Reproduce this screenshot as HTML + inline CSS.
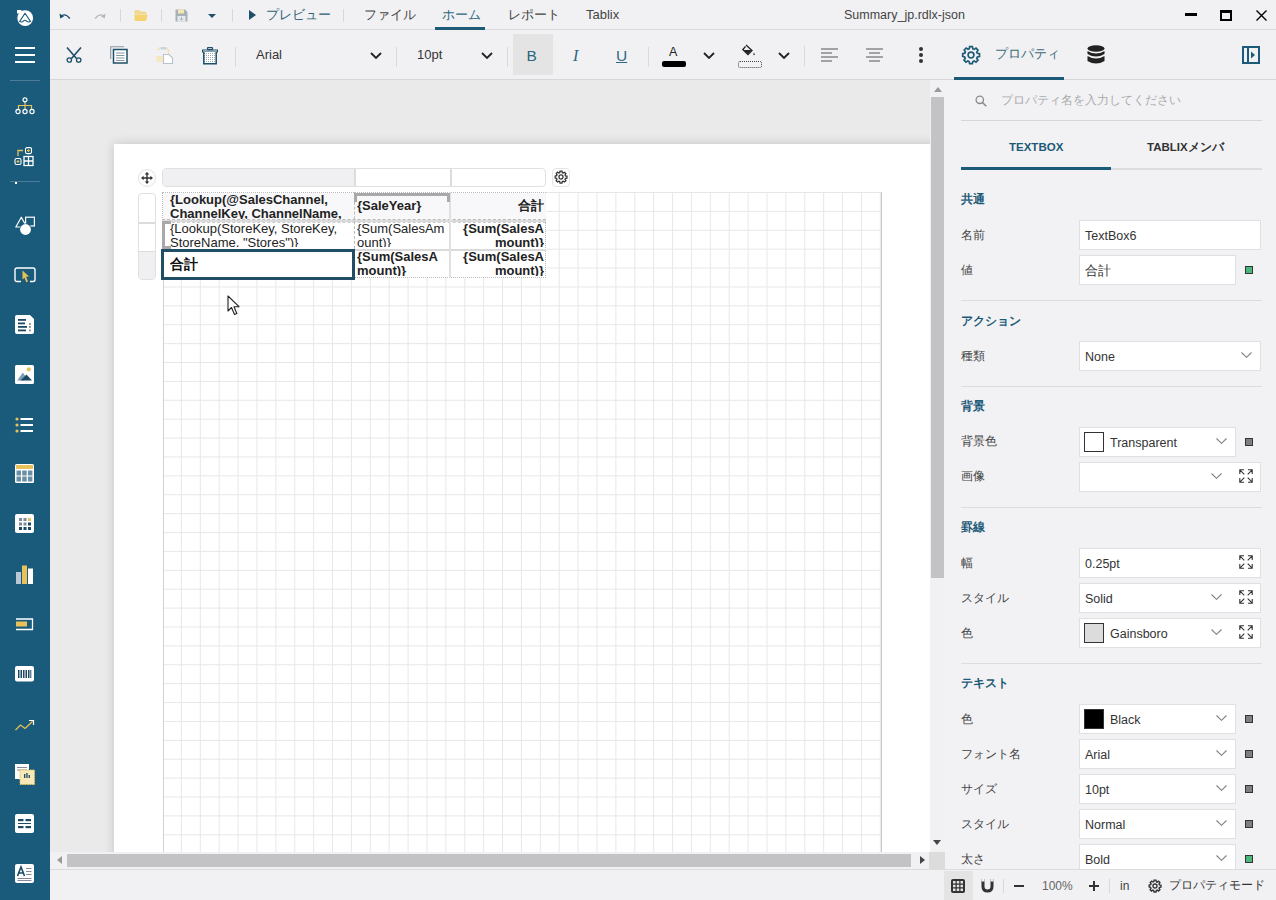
<!DOCTYPE html>
<html><head><meta charset="utf-8">
<style>
*{box-sizing:border-box;margin:0;padding:0}
html,body{width:1276px;height:900px;overflow:hidden;background:#f1f1f3;font-family:"Liberation Sans",sans-serif;color:#333;position:relative}
.abs{position:absolute}
.t{position:absolute;white-space:nowrap;line-height:16px}
#side{position:absolute;left:0;top:0;width:50px;height:900px;background:#1a5a7a}
#top{position:absolute;left:50px;top:0;width:1226px;height:30px;background:#f1f1f3;border-bottom:1px solid #dcdcde}
#tb{position:absolute;left:50px;top:30px;width:1226px;height:50px;background:#f1f1f3;border-bottom:1px solid #d6d6d8}
#canvas{position:absolute;left:50px;top:80px;width:895px;height:789px;background:#eaeaeb;overflow:hidden}
#page{position:absolute;left:64px;top:64px;width:900px;height:900px;background:#fff;box-shadow:0 0 10px rgba(0,0,0,.16)}
#grid{position:absolute;left:112.5px;top:112px;width:719px;height:700px;
 background-image:linear-gradient(to right,#e7e7eb 1px,transparent 1px),linear-gradient(to bottom,#e7e7eb 1px,transparent 1px);
 background-size:18.9px 18.9px;background-origin:border-box;background-position:-1px 0;border-left:1px solid #d2d2d2;border-right:1px solid #c8c8c8}
#right{position:absolute;left:945px;top:80px;width:331px;height:789px;background:#f2f2f4;overflow:hidden}
#status{position:absolute;left:50px;top:869px;width:1226px;height:31px;background:#f1f1f3;border-top:1px solid #dcdcde}
.cell{font-size:13px;line-height:13.6px;color:#222;overflow:hidden;white-space:normal}
.b{font-weight:bold}
.hdr{font-size:12px;font-weight:bold;color:#1d5a78}
.lbl{font-size:12px;color:#444}
.box{height:30px;border:1px solid #e0e0e2;background:#fff}
.val{font-size:12.5px;color:#333}
</style></head><body>
<div id="side">
 <!-- logo -->
 <svg class="abs" style="left:15px;top:8px" width="20" height="20" viewBox="0 0 20 20">
  <circle cx="10.2" cy="10.1" r="7.9" fill="#fff"/>
  <rect x="2" y="2" width="4.5" height="3.5" fill="#fff"/>
  <path d="M10 5.2 L15.6 13.6 Q13 14.6 11.3 12.8 Q10 11.8 8.7 12.8 Q7 14.6 4.6 13.6 Z" fill="none" stroke="#1a5a7a" stroke-width="1.1" stroke-linejoin="round"/>
 </svg>
 <!-- hamburger -->
 <div class="abs" style="left:15px;top:47px;width:20px;height:2px;background:#fff"></div>
 <div class="abs" style="left:15px;top:54px;width:20px;height:2px;background:#fff"></div>
 <div class="abs" style="left:15px;top:61px;width:20px;height:2px;background:#fff"></div>
 <div class="abs" style="left:10px;top:80px;width:30px;height:1px;background:#4d7d96"></div>
 <!-- tree -->
 <svg class="abs" style="left:15px;top:97px" width="20" height="18" viewBox="0 0 20 18">
  <path d="M10 4.5V8.5 M3.5 12V8.5H16.5V12 M10 8.5V12" stroke="#e8c15a" stroke-width="1.2" fill="none"/>
  <circle cx="10" cy="2.8" r="2" fill="none" stroke="#fff" stroke-width="1.2"/>
  <circle cx="3" cy="14.5" r="2.1" fill="none" stroke="#fff" stroke-width="1.2"/>
  <circle cx="10" cy="14.5" r="2.1" fill="none" stroke="#fff" stroke-width="1.2"/>
  <circle cx="17" cy="14.5" r="2.1" fill="none" stroke="#fff" stroke-width="1.2"/>
 </svg>
 <!-- grid-plus -->
 <svg class="abs" style="left:14px;top:147px" width="22" height="20" viewBox="0 0 22 20">
  <path d="M4 9V3.5H9" stroke="#e8c15a" stroke-width="1.3" fill="none"/>
  <rect x="11.5" y="0.6" width="6" height="6" rx="1.5" fill="none" stroke="#fff" stroke-width="1.1"/>
  <path d="M14.5 2.2V5 M13.1 3.6H15.9" stroke="#e8c15a" stroke-width="1.1"/>
  <rect x="1" y="11.5" width="6" height="6" rx="1.5" fill="none" stroke="#fff" stroke-width="1.1"/>
  <path d="M4 13.1V15.9 M2.6 14.5H5.4" stroke="#e8c15a" stroke-width="1.1"/>
  <rect x="10" y="9.5" width="9" height="9" fill="none" stroke="#fff" stroke-width="1.3"/>
  <path d="M14.5 9.5V18.5 M10 14H19" stroke="#fff" stroke-width="1.3"/>
 </svg>
 <div class="abs" style="left:10px;top:181px;width:30px;height:1px;background:#4d7d96"></div>
 <div class="abs" style="left:15px;top:182px;width:2px;height:2px;background:#fff"></div>
 <!-- shapes -->
 <svg class="abs" style="left:15px;top:216px" width="21" height="20" viewBox="0 0 21 20">
  <path d="M0.8 11 L6.3 1.2 L11.8 11 Z" fill="none" stroke="#fff" stroke-width="1.2" stroke-linejoin="round"/>
  <rect x="10.6" y="1.2" width="8.8" height="8.8" fill="none" stroke="#fff" stroke-width="1.2"/>
  <circle cx="10.5" cy="13.5" r="6" fill="#1a5a7a"/>
  <circle cx="10.5" cy="13.5" r="5.4" fill="#fff"/>
 </svg>
 <!-- select -->
 <svg class="abs" style="left:14px;top:267px" width="22" height="16" viewBox="0 0 22 16">
  <path d="M7 14.5H3Q1 14.5 1 12.5V3Q1 1 3 1H19Q21 1 21 3V12.5Q21 14.5 19 14.5H16" fill="none" stroke="#fff" stroke-width="1.4"/>
  <path d="M8.5 3.5 L15 9.5 L12 9.8 L14 14.5 L12.3 15.3 L10.5 10.7 L8.5 12.5 Z" fill="#e8c15a"/>
 </svg>
 <!-- doc -->
 <svg class="abs" style="left:15px;top:315px" width="20" height="19" viewBox="0 0 20 19">
  <path d="M2 0H15L19 4V17Q19 19 17 19H2Q0 19 0 17V2Q0 0 2 0Z" fill="#fff"/>
  <rect x="3" y="4" width="8" height="1.8" fill="#1a4a66"/>
  <rect x="3" y="7.5" width="7" height="1.8" fill="#1a4a66"/>
  <rect x="3" y="11" width="9" height="1.8" fill="#1a4a66"/>
  <rect x="3" y="14.5" width="8" height="1.8" fill="#1a4a66"/>
  <rect x="14" y="8" width="1.8" height="1.8" fill="#888"/>
  <rect x="14" y="11" width="1.8" height="1.8" fill="#888"/>
  <rect x="14" y="14.5" width="1.8" height="1.8" fill="#888"/>
 </svg>
 <!-- image -->
 <svg class="abs" style="left:15px;top:365px" width="20" height="19" viewBox="0 0 20 19">
  <rect x="0" y="0" width="19" height="19" rx="1.5" fill="#fff"/>
  <circle cx="13.8" cy="4.3" r="2.1" fill="#e8c15a"/>
  <path d="M2.2 15.5 L7.8 7.5 L11 12 L8.5 15.5 Z" fill="#7d9db0"/>
  <path d="M5.5 15.5 L11.5 9.5 L17 15.5 Z" fill="#1a4a66"/>
 </svg>
 <!-- list -->
 <svg class="abs" style="left:15px;top:417px" width="19" height="17" viewBox="0 0 19 17">
  <circle cx="2" cy="2" r="1.6" fill="#e8c15a"/><rect x="5.5" y="1" width="12.5" height="2" fill="#fff"/>
  <circle cx="2" cy="8" r="1.6" fill="#e8c15a"/><rect x="5.5" y="7" width="12.5" height="2" fill="#fff"/>
  <circle cx="2" cy="14" r="1.6" fill="#e8c15a"/><rect x="5.5" y="13" width="12.5" height="2" fill="#fff"/>
 </svg>
 <!-- table -->
 <svg class="abs" style="left:15px;top:464px" width="20" height="20" viewBox="0 0 20 20">
  <rect x="0" y="0" width="19" height="19" rx="1.5" fill="#fff"/>
  <rect x="1" y="1" width="17" height="4" fill="#e8c15a"/>
  <rect x="1.5" y="6.5" width="4.5" height="5" fill="#6a8ea3"/><rect x="7.2" y="6.5" width="4.5" height="5" fill="#6a8ea3"/><rect x="12.9" y="6.5" width="4.5" height="5" fill="#6a8ea3"/>
  <rect x="1.5" y="12.5" width="4.5" height="5" fill="#6a8ea3"/><rect x="7.2" y="12.5" width="4.5" height="5" fill="#6a8ea3"/><rect x="12.9" y="12.5" width="4.5" height="5" fill="#6a8ea3"/>
 </svg>
 <!-- matrix -->
 <svg class="abs" style="left:15px;top:514px" width="20" height="20" viewBox="0 0 20 20">
  <rect x="0" y="0" width="19" height="19" rx="2" fill="#fff"/>
  <rect x="4" y="4" width="3" height="3" fill="#7a8e9a"/><rect x="8.5" y="4" width="3" height="3" fill="#7a8e9a"/><rect x="13" y="4" width="3" height="3" fill="#e8c15a"/>
  <rect x="4" y="8.5" width="3" height="3" fill="#7a8e9a"/><rect x="8.5" y="8.5" width="3" height="3" fill="#7a8e9a"/><rect x="13" y="8.5" width="3" height="3" fill="#1a4a66"/>
  <rect x="4" y="13" width="3" height="3" fill="#1a4a66"/><rect x="8.5" y="13" width="3" height="3" fill="#1a4a66"/><rect x="13" y="13" width="3" height="3" fill="#1a4a66"/>
 </svg>
 <!-- chart -->
 <svg class="abs" style="left:16px;top:565px" width="18" height="19" viewBox="0 0 18 19">
  <rect x="0" y="7" width="5" height="12" fill="#b9c8d2"/>
  <rect x="6" y="0.5" width="5" height="18.5" fill="#e8c15a"/>
  <rect x="12" y="3.5" width="5" height="15.5" fill="#fff"/>
 </svg>
 <!-- bullet -->
 <svg class="abs" style="left:16px;top:618px" width="18" height="13" viewBox="0 0 18 13">
  <path d="M0 1H16.5V11.5H0" fill="none" stroke="#fff" stroke-width="1.3"/>
  <rect x="0" y="3.5" width="11" height="5" fill="#e8c15a"/>
 </svg>
 <!-- barcode -->
 <svg class="abs" style="left:15px;top:666px" width="20" height="16" viewBox="0 0 20 16">
  <rect x="0" y="0" width="19" height="15.5" rx="2" fill="#fff"/>
  <rect x="3" y="4" width="1.5" height="8" fill="#1a4a66"/><rect x="5.5" y="4" width="1.5" height="8" fill="#1a4a66"/>
  <rect x="8" y="4" width="1.5" height="8" fill="#1a4a66"/><rect x="10.5" y="4" width="1.5" height="8" fill="#1a4a66"/>
  <rect x="13" y="4" width="1.5" height="8" fill="#1a4a66"/><rect x="15.3" y="4" width="1" height="8" fill="#1a4a66"/>
 </svg>
 <!-- sparkline -->
 <svg class="abs" style="left:15px;top:719px" width="20" height="13" viewBox="0 0 20 13">
  <path d="M0.5 11 L5.5 6 L10 9.5 L17.5 2.5" fill="none" stroke="#e8c15a" stroke-width="1.3"/>
  <path d="M14 1.5H18.5V6" fill="none" stroke="#fff" stroke-width="1.2"/>
 </svg>
 <!-- subreport -->
 <svg class="abs" style="left:15px;top:764px" width="20" height="21" viewBox="0 0 20 21">
  <rect x="0" y="0" width="14" height="15" fill="#fff"/>
  <rect x="2" y="3" width="10" height="1" fill="#889"/><rect x="2" y="5.5" width="10" height="1" fill="#889"/>
  <rect x="5" y="6" width="14.5" height="14.5" fill="#f7e9b8" stroke="#e8c15a" stroke-width="1" stroke-dasharray="1.5 1"/>
  <rect x="9" y="10" width="1.3" height="4" fill="#1a4a66"/><rect x="11.3" y="9" width="1.3" height="5" fill="#1a4a66"/><rect x="13.6" y="11" width="1.3" height="3" fill="#1a4a66"/>
 </svg>
 <!-- banded -->
 <svg class="abs" style="left:15px;top:814px" width="20" height="20" viewBox="0 0 20 20">
  <rect x="0" y="0" width="19" height="19" rx="2" fill="#fff"/>
  <rect x="3" y="5" width="5.5" height="2.2" fill="#1a4a66"/><rect x="10.5" y="5" width="5.5" height="2.2" fill="#1a4a66"/>
  <rect x="3" y="9" width="13" height="1" fill="#1a4a66"/>
  <rect x="3" y="12" width="5.5" height="2.2" fill="#1a4a66"/><rect x="10.5" y="12" width="5.5" height="2.2" fill="#1a4a66"/>
 </svg>
 <!-- richtext -->
 <svg class="abs" style="left:15px;top:864px" width="20" height="20" viewBox="0 0 20 20">
  <rect x="0" y="0" width="19" height="19" rx="2" fill="#fff"/>
  <path d="M2.5 12 L6 3 L9.5 12 M3.8 9H8.2" fill="none" stroke="#1a4a66" stroke-width="1.6"/>
  <rect x="11" y="4" width="5.5" height="1" fill="#889"/><rect x="11" y="7" width="5.5" height="1" fill="#889"/><rect x="11" y="10" width="5.5" height="1" fill="#889"/>
  <rect x="2.5" y="14" width="14" height="1" fill="#889"/><rect x="2.5" y="16" width="14" height="1" fill="#889"/>
 </svg>
</div>

<div id="top">
 <!-- undo -->
 <svg class="abs" style="left:9px;top:12px" width="12" height="8" viewBox="0 0 12 8">
  <path d="M2.5 4 Q6.5 1 10.8 6.5" fill="none" stroke="#1d4f68" stroke-width="1.3"/>
  <path d="M0.5 1.5 L1.2 6.5 L5 4.5 Z" fill="#1d4f68"/>
 </svg>
 <!-- redo -->
 <svg class="abs" style="left:44px;top:12px" width="12" height="8" viewBox="0 0 12 8">
  <path d="M9.5 4 Q5.5 1 1.2 6.5" fill="none" stroke="#b4b8bb" stroke-width="1.3"/>
  <path d="M11.5 1.5 L10.8 6.5 L7 4.5 Z" fill="#b4b8bb"/>
 </svg>
 <div class="abs" style="left:70px;top:9px;width:1px;height:13px;background:#d8d8da"></div>
 <!-- folder -->
 <svg class="abs" style="left:84px;top:9px" width="14" height="13" viewBox="0 0 14 13">
  <path d="M0.5 2.5Q0.5 1 2 1H5L6.5 2.5H11Q12.5 2.5 12.5 4V5H0.5Z" fill="#f0d890"/>
  <path d="M0.5 5.5H13.5L12.5 11Q12.2 12 11 12H2Q0.8 12 0.5 11Z" fill="#f5d371"/>
 </svg>
 <div class="abs" style="left:111px;top:9px;width:1px;height:13px;background:#d8d8da"></div>
 <!-- save -->
 <svg class="abs" style="left:125px;top:9px" width="13" height="13" viewBox="0 0 13 13">
  <path d="M0.5 0.5H10L12.5 3V12.5H0.5Z" fill="#a7b1b8"/>
  <rect x="3" y="0.5" width="6" height="4" fill="#f3e6b0"/>
  <rect x="2.5" y="7" width="8" height="5.5" fill="#e6eaee"/>
  <path d="M6.5 8V11 M5 9.7L6.5 11.2L8 9.7" stroke="#a7b1b8" stroke-width="1" fill="none"/>
 </svg>
 <!-- caret -->
 <svg class="abs" style="left:158px;top:14px" width="8" height="4" viewBox="0 0 8 4"><path d="M0 0H8L4 4Z" fill="#1d4f68"/></svg>
 <div class="abs" style="left:182px;top:9px;width:1px;height:13px;background:#d8d8da"></div>
 <!-- play -->
 <svg class="abs" style="left:199px;top:10px" width="7" height="10" viewBox="0 0 7 10"><path d="M0 0L7 5L0 10Z" fill="#1d4f68"/></svg>
 <div class="t" style="left:216px;top:7px;font-size:13px;color:#2d5f77">プレビュー</div>
 <div class="abs" style="left:293px;top:9px;width:1px;height:13px;background:#d8d8da"></div>
 <div class="t" style="left:314px;top:7px;font-size:13px;color:#444">ファイル</div>
 <div class="t" style="left:392px;top:7px;font-size:13px;color:#2d6680">ホーム</div>
 <div class="abs" style="left:385px;top:27px;width:50px;height:3px;background:#1d5a78"></div>
 <div class="t" style="left:458px;top:7px;font-size:13px;color:#444">レポート</div>
 <div class="t" style="left:536px;top:7px;font-size:13px;color:#444">Tablix</div>
 <div class="t" style="left:794px;top:7px;font-size:12.5px;color:#444">Summary_jp.rdlx-json</div>
 <div class="abs" style="left:1135px;top:13px;width:12px;height:3px;background:#000"></div>
 <div class="abs" style="left:1170px;top:10px;width:12px;height:11px;border:2px solid #000;border-top-width:3px"></div>
 <svg class="abs" style="left:1206px;top:10px" width="11" height="11" viewBox="0 0 11 11"><path d="M0.5 0.5L10.5 10.5M10.5 0.5L0.5 10.5" stroke="#000" stroke-width="1.4"/></svg>
</div>

<div id="tb">
 <!-- scissors: 66.7-82 x, 48-63 y -->
 <svg class="abs" style="left:16px;top:17px" width="16" height="16" viewBox="0 0 16 16">
  <path d="M1 0.5L10.5 11.5 M15 0.5L5.5 11.5" stroke="#1d4f68" stroke-width="1.6"/>
  <circle cx="3.3" cy="13" r="2.2" fill="#f1f1f3" stroke="#1d4f68" stroke-width="1.3"/>
  <circle cx="12.7" cy="13" r="2.2" fill="#f1f1f3" stroke="#1d4f68" stroke-width="1.3"/>
 </svg>
 <!-- copy: 110.7-128, 46.7-64 -->
 <svg class="abs" style="left:60px;top:16px" width="18" height="18" viewBox="0 0 18 18">
  <path d="M0.7 13V0.7H14" fill="none" stroke="#8a98a0" stroke-width="1.1"/>
  <rect x="3.5" y="3.5" width="13.5" height="13.5" fill="#fff" stroke="#1d4f68" stroke-width="1.5"/>
  <path d="M6 7H14.5M6 9.5H14.5M6 12H14.5M6 14.5H14.5" stroke="#7a8a94" stroke-width="0.9"/>
 </svg>
 <!-- paste disabled: 156-173, 46-64 -->
 <svg class="abs" style="left:106px;top:16px" width="18" height="18" viewBox="0 0 18 18">
  <path d="M0.5 3.5H3V2H11V3.5H12.5V8" fill="none" stroke="#f0e2b0" stroke-width="1.2"/>
  <rect x="4.5" y="1" width="6" height="2.5" rx="1" fill="#c4d6e2"/>
  <rect x="0.5" y="10" width="6" height="6" fill="#f3e8bf"/>
  <path d="M7.5 8.5H13L16.5 12V17.5H7.5Z" fill="#fff" stroke="#b9c2c8" stroke-width="1.1"/>
 </svg>
 <!-- trash: 202-217, 47-64 -->
 <svg class="abs" style="left:152px;top:17px" width="16" height="18" viewBox="0 0 16 18">
  <rect x="5.5" y="0.6" width="5" height="2" rx="0.5" fill="none" stroke="#1d4f68" stroke-width="1.2"/>
  <path d="M0.5 3H15.5V5H0.5Z" fill="none" stroke="#1d4f68" stroke-width="1.2"/>
  <defs><pattern id="dots" width="2" height="2" patternUnits="userSpaceOnUse"><rect width="2" height="2" fill="#fff"/><rect width="1" height="1" fill="#9aa6ae"/></pattern></defs><path d="M1.8 5V16.8H14.2V5" fill="url(#dots)" stroke="#1d4f68" stroke-width="1.5"/>
 </svg>
 <div class="abs" style="left:185px;top:17px;width:1px;height:20px;background:#dadadc"></div>
 <div class="t" style="left:206px;top:17px;font-size:13px;color:#333">Arial</div>
 <svg class="abs" style="left:320px;top:22px" width="12" height="7" viewBox="0 0 12 7"><path d="M1 1L6 6L11 1" fill="none" stroke="#222" stroke-width="1.8"/></svg>
 <div class="abs" style="left:346px;top:17px;width:1px;height:20px;background:#dadadc"></div>
 <div class="t" style="left:367px;top:17px;font-size:13px;color:#333">10pt</div>
 <svg class="abs" style="left:431px;top:22px" width="12" height="7" viewBox="0 0 12 7"><path d="M1 1L6 6L11 1" fill="none" stroke="#222" stroke-width="1.8"/></svg>
 <div class="abs" style="left:457px;top:17px;width:1px;height:20px;background:#dadadc"></div>
 <div class="abs" style="left:463px;top:4px;width:40px;height:41px;background:#e4e4e5"></div>
 <div class="t" style="left:476.5px;top:18px;font-size:15.5px;color:#2d6680">B</div>
 <div class="t" style="left:523px;top:18px;font-size:16px;color:#2d6680;font-family:'Liberation Serif',serif;font-style:italic">I</div>
 <div class="t" style="left:566px;top:18px;font-size:15.5px;color:#2d6680;text-decoration:underline">U</div>
 <div class="abs" style="left:598px;top:17px;width:1px;height:20px;background:#dadadc"></div>
 <!-- text color -->
 <div class="t" style="left:619px;top:14px;font-size:12.5px;color:#222">A</div>
 <div class="abs" style="left:612px;top:30.7px;width:24px;height:6.3px;border-radius:2px;background:#000"></div>
 <svg class="abs" style="left:653px;top:22px" width="12" height="7" viewBox="0 0 12 7"><path d="M1 1L6 6L11 1" fill="none" stroke="#222" stroke-width="1.8"/></svg>
 <!-- fill -->
 <svg class="abs" style="left:692px;top:14px" width="14" height="13" viewBox="0 0 14 13">
  <path d="M4 1L10 6.5L6 10.5L0.8 5.5L3.5 2.5" fill="none" stroke="#222" stroke-width="1.3"/>
  <path d="M1.5 6H9.5L6 10Z" fill="#222"/>
  <path d="M12 8.5Q13.5 10.5 12 11.5Q10.5 10.5 12 8.5Z" fill="#222"/>
 </svg>
 <div class="abs" style="left:688px;top:31px;width:23.5px;height:6.5px;border:1px dotted #444;border-radius:2px"></div>
 <svg class="abs" style="left:728px;top:22px" width="12" height="7" viewBox="0 0 12 7"><path d="M1 1L6 6L11 1" fill="none" stroke="#222" stroke-width="1.8"/></svg>
 <div class="abs" style="left:754px;top:16px;width:1px;height:20px;background:#dadadc"></div>
 <!-- align left -->
 <svg class="abs" style="left:771px;top:18px" width="18" height="14" viewBox="0 0 18 14">
  <path d="M0 1H17M0 5H11M0 9H17M0 13H11" stroke="#555" stroke-width="1.1"/>
 </svg>
 <svg class="abs" style="left:816px;top:18px" width="18" height="14" viewBox="0 0 18 14">
  <path d="M0 1H17M3 5H14M0 9H17M3 13H14" stroke="#555" stroke-width="1.1"/>
 </svg>
 <!-- more -->
 <div class="abs" style="left:869px;top:17px;width:4px;height:4px;border-radius:2px;background:#333"></div>
 <div class="abs" style="left:869px;top:23px;width:4px;height:4px;border-radius:2px;background:#333"></div>
 <div class="abs" style="left:869px;top:29px;width:4px;height:4px;border-radius:2px;background:#333"></div>
 <!-- gear -->
 <svg class="abs" style="left:911px;top:15px" width="20" height="20" viewBox="0 0 24 24">
  <path fill="none" stroke="#1d5a78" stroke-width="2" d="M12 8.5a3.5 3.5 0 1 0 0 7a3.5 3.5 0 1 0 0-7z M10.3 2h3.4l.5 2.6 1.6.7 2.2-1.5 2.4 2.4-1.5 2.2.7 1.6 2.6.5v3.4l-2.6.5-.7 1.6 1.5 2.2-2.4 2.4-2.2-1.5-1.6.7-.5 2.6h-3.4l-.5-2.6-1.6-.7-2.2 1.5-2.4-2.4 1.5-2.2-.7-1.6L2 13.7v-3.4l2.6-.5.7-1.6-1.5-2.2 2.4-2.4 2.2 1.5 1.6-.7z"/>
 </svg>
 <div class="t" style="left:945px;top:16px;font-size:13px;color:#3d6a80">プロパティ</div>
 <div class="abs" style="left:904px;top:47px;width:110px;height:3px;background:#1d5a78"></div>
 <!-- database -->
 <svg class="abs" style="left:1037px;top:15px" width="18" height="20" viewBox="0 0 18 20">
  <ellipse cx="9" cy="3.5" rx="8.5" ry="3.3" fill="#222"/>
  <path d="M0.5 6Q9 11 17.5 6V9Q9 14 0.5 9Z" fill="#222"/>
  <path d="M0.5 11Q9 16 17.5 11V16Q9 21 0.5 16Z" fill="#222"/>
 </svg>
 <!-- panel toggle -->
 <svg class="abs" style="left:1192px;top:16px" width="18" height="18" viewBox="0 0 18 18">
  <rect x="1" y="1" width="16" height="16" fill="none" stroke="#1d5a78" stroke-width="2"/>
  <path d="M6 1V17" stroke="#1d5a78" stroke-width="2"/>
  <path d="M9 5.5L13 9L9 12.5Z" fill="#1d5a78"/>
 </svg>
</div>

<div id="canvas">
 <div id="page"></div>
 <div id="grid"></div>
 <!-- move handle -->
 <div class="abs" style="left:88px;top:88.5px;width:18px;height:18px;border:1px solid #e2e2e2;border-radius:50%;background:#fff"></div>
 <svg class="abs" style="left:91px;top:91.5px" width="12" height="12" viewBox="0 0 12 12">
  <path d="M6 1V11M1 6H11" stroke="#333" stroke-width="1.4"/>
  <path d="M6 0L8.3 2.6H3.7Z M6 12L8.3 9.4H3.7Z M0 6L2.6 3.7V8.3Z M12 6L9.4 3.7V8.3Z" fill="#333"/>
 </svg>
 <!-- column headers -->
 <div class="abs" style="left:112px;top:88px;width:384px;height:19px;border:1px solid #e0e0e0;border-radius:4px;background:#fff;overflow:hidden">
  <div class="abs" style="left:0;top:0;width:191px;height:17px;background:#f0f0f2"></div>
  <div class="abs" style="left:191px;top:0;width:1.5px;height:17px;background:#dcdcdc"></div>
  <div class="abs" style="left:287px;top:0;width:1.5px;height:17px;background:#dcdcdc"></div>
 </div>
 <div class="abs" style="left:502px;top:88px;width:18px;height:19px;border:1px solid #e4e4e4;border-radius:4px;background:#fff"></div>
 <svg class="abs" style="left:504px;top:90px" width="14" height="14" viewBox="0 0 24 24">
  <path fill="none" stroke="#333" stroke-width="2.2" d="M12 8.5a3.5 3.5 0 1 0 0 7a3.5 3.5 0 1 0 0-7z M10.3 2h3.4l.5 2.6 1.6.7 2.2-1.5 2.4 2.4-1.5 2.2.7 1.6 2.6.5v3.4l-2.6.5-.7 1.6 1.5 2.2-2.4 2.4-2.2-1.5-1.6.7-.5 2.6h-3.4l-.5-2.6-1.6-.7-2.2 1.5-2.4-2.4 1.5-2.2-.7-1.6L2 13.7v-3.4l2.6-.5.7-1.6-1.5-2.2 2.4-2.4 2.2 1.5 1.6-.7z"/>
 </svg>
 <!-- row handles -->
 <div class="abs" style="left:88px;top:113px;width:18px;height:87px;border:1px solid #e0e0e0;border-radius:4px;background:#fff;overflow:hidden">
  <div class="abs" style="left:0;top:28px;width:16px;height:1.5px;background:#dcdcdc"></div>
  <div class="abs" style="left:0;top:56.5px;width:16px;height:1.5px;background:#dcdcdc"></div>
  <div class="abs" style="left:0;top:58px;width:16px;height:28px;background:#f0f0f2"></div>
 </div>
 <!-- table -->
 <div class="abs" style="left:112px;top:112px;width:384px;height:86px;border:1px dotted #bbb;background:#fff"></div>
 <div class="abs" style="left:112.5px;top:112.5px;width:383px;height:27px;background:#f8f8fa"></div>
 <div class="abs" style="left:112px;top:139px;width:384px;height:0;border-top:1px dashed #bbb"></div>
 <div class="abs" style="left:112px;top:140px;width:384px;height:2px;background:#dadada"></div>
 <div class="abs" style="left:112px;top:142px;width:384px;height:0;border-top:1px dashed #ccc"></div>
 <div class="abs" style="left:112px;top:169px;width:384px;height:1.5px;background:#dadada"></div>
 <div class="abs" style="left:303.5px;top:112px;width:0;height:86px;border-left:1px dashed #bbb"></div>
 <div class="abs" style="left:398.5px;top:112px;width:2px;height:86px;background:#e0e0e0"></div>
 <!-- bracket over SaleYear -->
 <div class="abs" style="left:304px;top:112.5px;width:96px;height:9.5px;border:3px solid #a9a9a9;border-bottom:none"></div>
 <!-- bracket row 2 -->
 <div class="abs" style="left:112px;top:141px;width:9px;height:28px;border:3px solid #a9a9a9;border-right:none"></div>
 <!-- texts -->
 <div class="abs cell b" style="left:120px;top:113px;width:183px;height:25.5px">{Lookup(@SalesChannel, ChannelKey, ChannelName, "Channels")}</div>
 <div class="abs cell b" style="left:307px;top:119px;width:92px;height:16px">{SaleYear}</div>
 <div class="abs cell b" style="left:402px;top:119px;width:92px;height:16px;text-align:right">合計</div>
 <div class="abs cell" style="left:120px;top:142px;width:183px;height:24.5px">{Lookup(StoreKey, StoreKey, StoreName, "Stores")}</div>
 <div class="abs cell" style="left:307px;top:142px;width:92px;height:24.5px;word-break:break-all">{Sum(SalesAmount)}</div>
 <div class="abs cell b" style="left:402px;top:142px;width:92px;height:24.5px;text-align:right;word-break:break-all">{Sum(SalesAmount)}</div>
 <div class="abs cell b" style="left:307px;top:170px;width:92px;height:25.5px;word-break:break-all">{Sum(SalesAmount)}</div>
 <div class="abs cell b" style="left:402px;top:170px;width:92px;height:25.5px;text-align:right;word-break:break-all">{Sum(SalesAmount)}</div>
 <!-- selected cell -->
 <div class="abs" style="left:111px;top:169px;width:194px;height:31px;border:3px solid #1f4e66;background:#fff"></div>
 <div class="abs cell b" style="left:120px;top:176px;width:100px;height:17px;font-size:13.5px;line-height:17px;color:#111">合計</div>
 <!-- cursor -->
 <svg class="abs" style="left:177px;top:215px" width="13" height="21" viewBox="0 0 13 21">
  <path d="M1 1V16L4.5 12.5L7.5 19.5L9.8 18.5L7 11.7H12Z" fill="#fff" stroke="#222" stroke-width="1.1" stroke-linejoin="round"/>
 </svg>
 <!-- v scrollbar -->
 <div class="abs" style="left:880px;top:0;width:15px;height:772px;background:#f1f1f3"></div>
 <svg class="abs" style="left:884px;top:7px" width="8" height="5" viewBox="0 0 8 5"><path d="M0 5L4 0L8 5Z" fill="#999"/></svg>
 <div class="abs" style="left:881px;top:17px;width:13px;height:481px;background:#c3c3c5"></div>
 <svg class="abs" style="left:883px;top:760px" width="8" height="5" viewBox="0 0 8 5"><path d="M0 0L4 5L8 0Z" fill="#444"/></svg>
 <!-- h scrollbar -->
 <div class="abs" style="left:0;top:772px;width:880px;height:17px;background:#f1f1f3"></div>
 <svg class="abs" style="left:7px;top:776px" width="5" height="8" viewBox="0 0 5 8"><path d="M5 0L0 4L5 8Z" fill="#999"/></svg>
 <div class="abs" style="left:16.5px;top:774px;width:844.5px;height:13px;background:#c3c3c5"></div>
 <svg class="abs" style="left:869.5px;top:776px" width="5" height="8" viewBox="0 0 5 8"><path d="M0 0L5 4L0 8Z" fill="#444"/></svg>
 <div class="abs" style="left:879px;top:772px;width:16px;height:17px;background:#dcdcdc"></div>
</div>

<div id="right">
<svg class="abs" style="left:30px;top:15px" width="12" height="12" viewBox="0 0 12 12"><circle cx="4.8" cy="4.8" r="3.7" fill="none" stroke="#8a8a8a" stroke-width="1.3"/><path d="M7.5 7.5L11.3 11.3" stroke="#8a8a8a" stroke-width="1.6"/></svg>
<div class="t" style="left:56px;top:12px;font-size:11.7px;color:#aaa">プロパティ名を入力してください</div>
<div class="abs" style="left:16px;top:40px;width:301px;height:1px;background:#d6d6d8"></div>
<div class="t" style="left:64px;top:59px;font-size:11.5px;font-weight:bold;color:#1d5a78">TEXTBOX</div>
<div class="t" style="left:202px;top:59px;font-size:11.5px;font-weight:bold;color:#333">TABLIXメンバ</div>
<div class="abs" style="left:16px;top:87px;width:150px;height:3px;background:#1d5a78"></div>
<div class="abs" style="left:166px;top:88px;width:151px;height:2px;background:#dcdcde"></div>
<div class="t hdr" style="left:16px;top:111px">共通</div>
<div class="t lbl" style="left:16px;top:147px">名前</div>
<div class="abs box" style="left:134px;top:140px;width:182px"></div>
<div class="t val" style="left:140px;top:148px">TextBox6</div>
<div class="t lbl" style="left:16px;top:182px">値</div>
<div class="abs box" style="left:134px;top:175px;width:157px"></div>
<div class="t val" style="left:140px;top:183px">合計</div>
<div class="abs" style="left:300px;top:186px;width:8px;height:8px;border:1.3px solid #333;background:#4cb77a"></div>
<div class="abs" style="left:16px;top:220px;width:301px;height:1px;background:#dcdcde"></div>
<div class="t hdr" style="left:16px;top:233px">アクション</div>
<div class="t lbl" style="left:16px;top:268px">種類</div>
<div class="abs box" style="left:134px;top:261px;width:182px"></div>
<div class="t val" style="left:140px;top:269px">None</div>
<svg class="abs" style="left:296px;top:272px" width="11" height="6" viewBox="0 0 11 6"><path d="M0.5 0.5L5.5 5.3L10.5 0.5" fill="none" stroke="#808080" stroke-width="1.1"/></svg>
<div class="abs" style="left:16px;top:306px;width:301px;height:1px;background:#dcdcde"></div>
<div class="t hdr" style="left:16px;top:318px">背景</div>
<div class="t lbl" style="left:16px;top:353px">背景色</div>
<div class="abs box" style="left:134px;top:347px;width:157px"></div>
<div class="abs" style="left:139px;top:352px;width:20px;height:20px;border:1px solid #333;background:#fff"></div>
<div class="t val" style="left:165px;top:355px">Transparent</div>
<svg class="abs" style="left:271px;top:358px" width="11" height="6" viewBox="0 0 11 6"><path d="M0.5 0.5L5.5 5.3L10.5 0.5" fill="none" stroke="#808080" stroke-width="1.1"/></svg>
<div class="abs" style="left:300px;top:358px;width:8px;height:8px;border:1.3px solid #333;background:#7f7f7f"></div>
<div class="t lbl" style="left:16px;top:388px">画像</div>
<div class="abs box" style="left:134px;top:382px;width:182px"></div>
<svg class="abs" style="left:266px;top:393px" width="11" height="6" viewBox="0 0 11 6"><path d="M0.5 0.5L5.5 5.3L10.5 0.5" fill="none" stroke="#808080" stroke-width="1.1"/></svg>
<svg class="abs" style="left:294px;top:389px" width="14" height="14" viewBox="0 0 14 14"><path d="M0.8 5V0.8H5 M0.8 0.8L5.3 5.3 M9 0.8H13.2V5 M13.2 0.8L8.7 5.3 M0.8 9V13.2H5 M0.8 13.2L5.3 8.7 M9 13.2H13.2V9 M13.2 13.2L8.7 8.7" fill="none" stroke="#333" stroke-width="1.1"/></svg>
<div class="abs" style="left:16px;top:427px;width:301px;height:1px;background:#dcdcde"></div>
<div class="t hdr" style="left:16px;top:439px">罫線</div>
<div class="t lbl" style="left:16px;top:475px">幅</div>
<div class="abs box" style="left:134px;top:468px;width:182px"></div>
<div class="t val" style="left:140px;top:476px">0.25pt</div>
<svg class="abs" style="left:294px;top:475px" width="14" height="14" viewBox="0 0 14 14"><path d="M0.8 5V0.8H5 M0.8 0.8L5.3 5.3 M9 0.8H13.2V5 M13.2 0.8L8.7 5.3 M0.8 9V13.2H5 M0.8 13.2L5.3 8.7 M9 13.2H13.2V9 M13.2 13.2L8.7 8.7" fill="none" stroke="#333" stroke-width="1.1"/></svg>
<div class="t lbl" style="left:16px;top:510px">スタイル</div>
<div class="abs box" style="left:134px;top:503px;width:182px"></div>
<div class="t val" style="left:140px;top:511px">Solid</div>
<svg class="abs" style="left:266px;top:514px" width="11" height="6" viewBox="0 0 11 6"><path d="M0.5 0.5L5.5 5.3L10.5 0.5" fill="none" stroke="#808080" stroke-width="1.1"/></svg>
<svg class="abs" style="left:294px;top:510px" width="14" height="14" viewBox="0 0 14 14"><path d="M0.8 5V0.8H5 M0.8 0.8L5.3 5.3 M9 0.8H13.2V5 M13.2 0.8L8.7 5.3 M0.8 9V13.2H5 M0.8 13.2L5.3 8.7 M9 13.2H13.2V9 M13.2 13.2L8.7 8.7" fill="none" stroke="#333" stroke-width="1.1"/></svg>
<div class="t lbl" style="left:16px;top:545px">色</div>
<div class="abs box" style="left:134px;top:538px;width:182px"></div>
<div class="abs" style="left:139px;top:543px;width:20px;height:20px;border:1px solid #333;background:#dcdcdc"></div>
<div class="t val" style="left:165px;top:546px">Gainsboro</div>
<svg class="abs" style="left:266px;top:549px" width="11" height="6" viewBox="0 0 11 6"><path d="M0.5 0.5L5.5 5.3L10.5 0.5" fill="none" stroke="#808080" stroke-width="1.1"/></svg>
<svg class="abs" style="left:294px;top:545px" width="14" height="14" viewBox="0 0 14 14"><path d="M0.8 5V0.8H5 M0.8 0.8L5.3 5.3 M9 0.8H13.2V5 M13.2 0.8L8.7 5.3 M0.8 9V13.2H5 M0.8 13.2L5.3 8.7 M9 13.2H13.2V9 M13.2 13.2L8.7 8.7" fill="none" stroke="#333" stroke-width="1.1"/></svg>
<div class="abs" style="left:16px;top:583px;width:301px;height:1px;background:#dcdcde"></div>
<div class="t hdr" style="left:16px;top:595px">テキスト</div>
<div class="t lbl" style="left:16px;top:631px">色</div>
<div class="abs box" style="left:134px;top:624px;width:157px"></div>
<div class="abs" style="left:139px;top:629px;width:20px;height:20px;border:1px solid #333;background:#000"></div>
<div class="t val" style="left:165px;top:632px">Black</div>
<svg class="abs" style="left:271px;top:635px" width="11" height="6" viewBox="0 0 11 6"><path d="M0.5 0.5L5.5 5.3L10.5 0.5" fill="none" stroke="#808080" stroke-width="1.1"/></svg>
<div class="abs" style="left:300px;top:635px;width:8px;height:8px;border:1.3px solid #333;background:#7f7f7f"></div>
<div class="t lbl" style="left:16px;top:666px">フォント名</div>
<div class="abs box" style="left:134px;top:659px;width:157px"></div>
<div class="t val" style="left:140px;top:667px">Arial</div>
<svg class="abs" style="left:271px;top:670px" width="11" height="6" viewBox="0 0 11 6"><path d="M0.5 0.5L5.5 5.3L10.5 0.5" fill="none" stroke="#808080" stroke-width="1.1"/></svg>
<div class="abs" style="left:300px;top:670px;width:8px;height:8px;border:1.3px solid #333;background:#7f7f7f"></div>
<div class="t lbl" style="left:16px;top:701px">サイズ</div>
<div class="abs box" style="left:134px;top:694px;width:157px"></div>
<div class="t val" style="left:140px;top:702px">10pt</div>
<svg class="abs" style="left:271px;top:705px" width="11" height="6" viewBox="0 0 11 6"><path d="M0.5 0.5L5.5 5.3L10.5 0.5" fill="none" stroke="#808080" stroke-width="1.1"/></svg>
<div class="abs" style="left:300px;top:705px;width:8px;height:8px;border:1.3px solid #333;background:#7f7f7f"></div>
<div class="t lbl" style="left:16px;top:736px">スタイル</div>
<div class="abs box" style="left:134px;top:729px;width:157px"></div>
<div class="t val" style="left:140px;top:737px">Normal</div>
<svg class="abs" style="left:271px;top:740px" width="11" height="6" viewBox="0 0 11 6"><path d="M0.5 0.5L5.5 5.3L10.5 0.5" fill="none" stroke="#808080" stroke-width="1.1"/></svg>
<div class="abs" style="left:300px;top:740px;width:8px;height:8px;border:1.3px solid #333;background:#7f7f7f"></div>
<div class="t lbl" style="left:16px;top:771px">太さ</div>
<div class="abs box" style="left:134px;top:764px;width:157px"></div>
<div class="t val" style="left:140px;top:772px">Bold</div>
<svg class="abs" style="left:271px;top:775px" width="11" height="6" viewBox="0 0 11 6"><path d="M0.5 0.5L5.5 5.3L10.5 0.5" fill="none" stroke="#808080" stroke-width="1.1"/></svg>
<div class="abs" style="left:300px;top:775px;width:8px;height:8px;border:1.3px solid #333;background:#4cb77a"></div>
</div>
<div id="status">
 <div class="abs" style="left:894px;top:1px;width:29px;height:31px;background:#e4e4e5"></div>
 <svg class="abs" style="left:901px;top:9px" width="14" height="14" viewBox="0 0 14 14">
  <rect x="0" y="0" width="14" height="14" rx="2" fill="#333"/>
  <rect x="2" y="2" width="2.5" height="2.5" fill="#e4e4e5"/><rect x="5.75" y="2" width="2.5" height="2.5" fill="#e4e4e5"/><rect x="9.5" y="2" width="2.5" height="2.5" fill="#e4e4e5"/>
  <rect x="2" y="5.75" width="2.5" height="2.5" fill="#e4e4e5"/><rect x="5.75" y="5.75" width="2.5" height="2.5" fill="#e4e4e5"/><rect x="9.5" y="5.75" width="2.5" height="2.5" fill="#e4e4e5"/>
  <rect x="2" y="9.5" width="2.5" height="2.5" fill="#e4e4e5"/><rect x="5.75" y="9.5" width="2.5" height="2.5" fill="#e4e4e5"/><rect x="9.5" y="9.5" width="2.5" height="2.5" fill="#e4e4e5"/>
 </svg>
 <svg class="abs" style="left:931px;top:9px" width="13" height="14" viewBox="0 0 13 14">
  <path d="M2 0V7.5Q2 12 6.5 12Q11 12 11 7.5V0" fill="none" stroke="#333" stroke-width="3"/>
  <rect x="0.5" y="0" width="3" height="2.5" fill="#f1f1f3"/><rect x="9.5" y="0" width="3" height="2.5" fill="#f1f1f3"/>
 </svg>
 <div class="abs" style="left:953px;top:9px;width:1px;height:14px;background:#d8d8da"></div>
 <div class="abs" style="left:964px;top:15px;width:10px;height:1.6px;background:#333"></div>
 <div class="t" style="left:992px;top:8px;font-size:12px;color:#666">100%</div>
 <div class="abs" style="left:1039px;top:15px;width:10px;height:1.6px;background:#333"></div>
 <div class="abs" style="left:1043.2px;top:10.8px;width:1.6px;height:10px;background:#333"></div>
 <div class="abs" style="left:1059px;top:9px;width:1px;height:14px;background:#d8d8da"></div>
 <div class="t" style="left:1070px;top:8px;font-size:12px;color:#444">in</div>
 <svg class="abs" style="left:1098px;top:9px" width="14" height="14" viewBox="0 0 24 24">
  <path fill="none" stroke="#333" stroke-width="2.4" d="M12 8.5a3.5 3.5 0 1 0 0 7a3.5 3.5 0 1 0 0-7z M10.3 2h3.4l.5 2.6 1.6.7 2.2-1.5 2.4 2.4-1.5 2.2.7 1.6 2.6.5v3.4l-2.6.5-.7 1.6 1.5 2.2-2.4 2.4-2.2-1.5-1.6.7-.5 2.6h-3.4l-.5-2.6-1.6-.7-2.2 1.5-2.4-2.4 1.5-2.2-.7-1.6L2 13.7v-3.4l2.6-.5.7-1.6-1.5-2.2 2.4-2.4 2.2 1.5 1.6-.7z"/>
 </svg>
 <div class="t" style="left:1119px;top:7px;font-size:12px;color:#333">プロパティモード</div>
</div>

</body></html>
